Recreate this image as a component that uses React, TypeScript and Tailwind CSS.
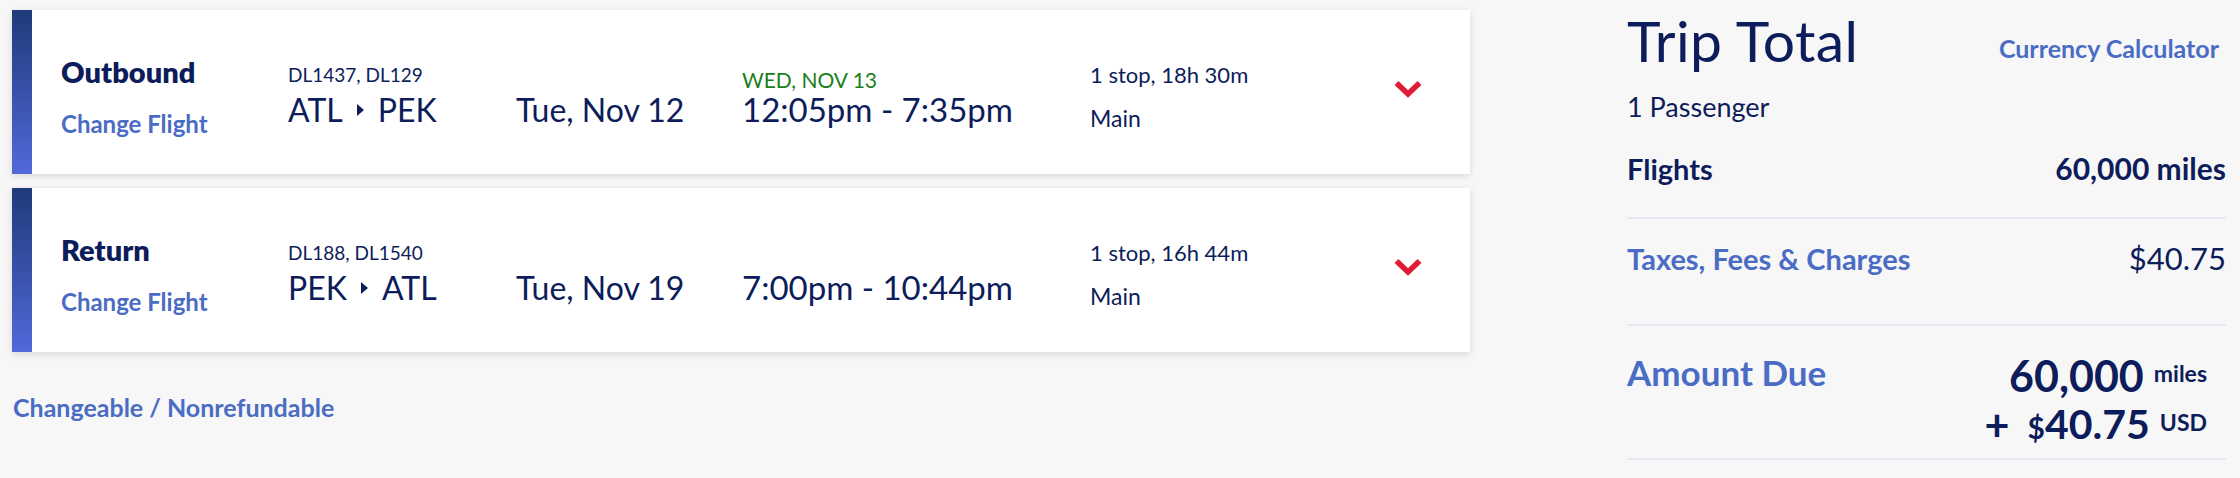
import React from 'react'

interface Flight {
  label: string
  numbers: string
  from: string
  to: string
  date: string
  arrivalNote?: string
  times: string
  stops: string
  cabin: string
}

const flights: Flight[] = [
  {
    label: 'Outbound',
    numbers: 'DL1437, DL129',
    from: 'ATL',
    to: 'PEK',
    date: 'Tue, Nov 12',
    arrivalNote: 'WED, NOV 13',
    times: '12:05pm - 7:35pm',
    stops: '1 stop, 18h 30m',
    cabin: 'Main',
  },
  {
    label: 'Return',
    numbers: 'DL188, DL1540',
    from: 'PEK',
    to: 'ATL',
    date: 'Tue, Nov 19',
    times: '7:00pm - 10:44pm',
    stops: '1 stop, 16h 44m',
    cabin: 'Main',
  },
]

function Chevron() {
  return (
    <svg width="28" height="17" viewBox="0 0 28 17">
      <polyline points="2.5,2 14,13 25.5,2" fill="none" stroke="#e01a37" strokeWidth="5.5" />
    </svg>
  )
}

function FlightCard({ flight }: { flight: Flight }) {
  return (
    <div className="flex h-[164px] bg-white shadow-[0_2px_7px_rgba(0,0,0,0.13)]">
      <div className="w-5 bg-gradient-to-b from-[#1f3b7a] to-[#5169da]" />
      <div className="flex flex-1 pl-[29px]">
        {/* label + change link */}
        <div className="w-[227px] pt-[47px]">
          <p className="text-[29px] font-extrabold leading-none">{flight.label}</p>
          <p className="mt-[26px] text-[24px] font-bold leading-none text-[#4a6cc4]">Change Flight</p>
        </div>

        {/* flight numbers + route */}
        <div className="w-[228px] pt-[55px]">
          <p className="text-[19px] leading-none">{flight.numbers}</p>
          <p className="mt-[10px] flex items-center text-[32px] leading-none">
            {flight.from}
            <span className="mx-[14px] inline-block h-0 w-0 border-y-[6px] border-l-[7px] border-y-transparent border-l-[#0e1d58]" />
            {flight.to}
          </p>
        </div>

        <div className="w-[226px] pt-[84px]">
          <p className="text-[32px] leading-none">{flight.date}</p>
        </div>

        {/* times */}
        <div className="w-[348px] pt-[59px]">
          <p className="h-[21px] text-[21px] leading-none text-[#198019]">{flight.arrivalNote}</p>
          <p className="mt-[3px] text-[33px] leading-none">{flight.times}</p>
        </div>

        <div className="w-[304px] pt-[54px]">
          <p className="text-[22px] leading-none">{flight.stops}</p>
          <p className="mt-[21px] text-[23px] leading-none">{flight.cabin}</p>
        </div>

        <div className="pt-[71px]">
          <Chevron />
        </div>
      </div>
    </div>
  )
}

export default function App() {
  return (
    <div className="flex min-h-[478px] bg-[#f7f7f7] pl-3 pt-[10px] font-['Lato',sans-serif] text-[#0d1c5a]">
      <div className="w-[1458px]">
        <div className="flex flex-col gap-[14px]">
          {flights.map((f) => (
            <FlightCard key={f.label} flight={f} />
          ))}
        </div>
        <p className="mt-[43px] pl-px text-[25px] font-bold leading-none text-[#4a6cc4]">
          Changeable / Nonrefundable
        </p>
      </div>

      {/* Trip total */}
      <aside className="ml-[157px] w-[599px] pt-[2px]">
        <div className="flex items-start justify-between">
          <h1 className="text-[57px] leading-none tracking-[0.4px]">Trip Total</h1>
          <a className="mr-[7px] mt-[24px] text-[25px] font-bold leading-none text-[#4a6cc4]">
            Currency Calculator
          </a>
        </div>
        <p className="mt-[24px] text-[27px] leading-none">1 Passenger</p>

        <div className="mt-[33px] flex items-baseline justify-between border-b-2 border-[#e4e8f1] pb-[34px] font-bold leading-none">
          <span className="text-[29px]">Flights</span>
          <span className="text-[30px]">60,000 miles</span>
        </div>

        <div className="flex items-baseline justify-between border-b-2 border-[#e4e8f1] pb-[50px] pt-[24px] leading-none">
          <span className="text-[29px] font-bold text-[#4a6cc4]">Taxes, Fees &amp; Charges</span>
          <span className="text-[31px]">$40.75</span>
        </div>

        <div className="flex items-start justify-between border-b-2 border-[#e4e8f1] pb-[12px] pt-[28px]">
          <span className="mt-px text-[35px] font-bold leading-none text-[#4a6cc4]">Amount Due</span>
          <div className="flex flex-col items-end pr-[19px] font-bold">
            <div className="flex items-start">
              <span className="text-[43px] leading-none">60,000</span>
              <span className="ml-[10px] mt-[8px] text-[23px] leading-none">miles</span>
            </div>
            <div className="mt-[6px] flex items-start">
              <span className="text-[43px] leading-none">+</span>
              <span className="ml-[18px] flex items-baseline text-[41px] leading-none">
                <span className="text-[30px]">$</span>40.75
              </span>
              <span className="ml-[10px] mt-[8px] text-[23px] leading-none">USD</span>
            </div>
          </div>
        </div>
      </aside>
    </div>
  )
}
